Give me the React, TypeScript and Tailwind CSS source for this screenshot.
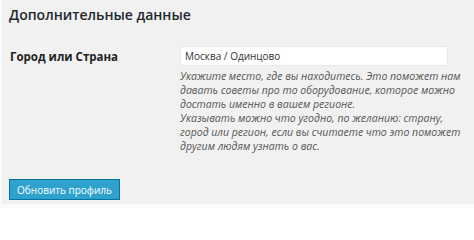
export default function App() {
  return (
    <div className="w-[474px] h-[208px] bg-[#fafafa] overflow-hidden" style={{ fontFamily: '"Open Sans", "Noto Sans", sans-serif' }}>
      <div className="ml-[2px] h-[204px] bg-[#f1f1f1] pl-[7px] pt-[5px]">
        <h3 className="text-[14px] leading-[20px] font-semibold text-[#23282d]">Дополнительные данные</h3>

        <div className="flex mt-[21px]">
          <div className="w-[171px] pt-[3px] pl-[1px] text-[11.5px] leading-[16px] font-bold text-[#222]">Город или Страна</div>
          <div className="flex flex-col">
            <input
              readOnly
              value="Москва / Одинцово"
              className="w-[268px] h-[20px] bg-white border border-[#e8e8e8] px-[4px] text-[10px] text-[#333] outline-none"
            />
            <p className="w-[286px] mt-[3px] text-[10.5px] leading-[14px] italic text-[#555]">
              Укажите место, где вы находитесь. Это поможет нам давать советы про то оборудование, которое можно достать именно в вашем регионе.
              <br />
              Указывать можно что угодно, по желанию: страну, город или регион, если вы считаете что это поможет другим людям узнать о вас.
            </p>
          </div>
        </div>

        <button className="mt-[26px] h-[21px] w-[111px] bg-[#2ea2cc] border border-[#0074a2] text-white text-[10px] leading-[18px]">
          Обновить профиль
        </button>
      </div>
    </div>
  );
}
